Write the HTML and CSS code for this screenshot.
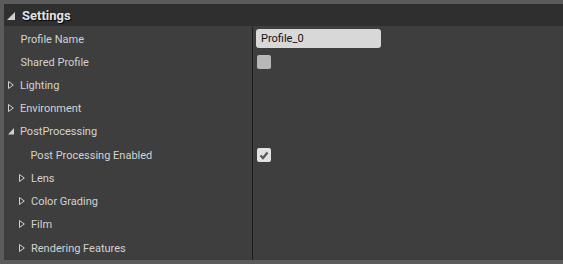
FILE: index.html
```html
<!DOCTYPE html>
<html>
<head>
<meta charset="utf-8">
<link rel="stylesheet" href="styles.css">
</head>
<body>
<div class="panel">
  <div class="header">
    <svg class="tri-open big" width="9" height="8" viewBox="0 0 9 8"><polygon points="8,0 8,8 0,8" fill="#cfcfcf"/></svg>
    <span class="title">Settings</span>
  </div>
  <div class="body">
    <div class="row">
      <div class="name l1"><span class="label">Profile Name</span></div>
      <div class="value"><div class="input">Profile_0</div></div>
    </div>
    <div class="row">
      <div class="name l1"><span class="label">Shared Profile</span></div>
      <div class="value"><div class="check"></div></div>
    </div>
    <div class="row">
      <div class="name l0"><svg class="tri" width="6" height="8" viewBox="0 0 6 8"><polygon points="0.5,0.5 5.3,4 0.5,7.5" fill="none" stroke="#cfcfcf" stroke-width="1"/></svg><span class="label">Lighting</span></div>
      <div class="value"></div>
    </div>
    <div class="row">
      <div class="name l0"><svg class="tri" width="6" height="8" viewBox="0 0 6 8"><polygon points="0.5,0.5 5.3,4 0.5,7.5" fill="none" stroke="#cfcfcf" stroke-width="1"/></svg><span class="label">Environment</span></div>
      <div class="value"></div>
    </div>
    <div class="row">
      <div class="name l0"><svg class="tri" width="6" height="7" viewBox="0 0 6 7"><polygon points="6,0 6,6.5 0,6.5" fill="#cfcfcf"/></svg><span class="label">PostProcessing</span></div>
      <div class="value"></div>
    </div>
    <div class="row">
      <div class="name l2"><span class="label">Post Processing Enabled</span></div>
      <div class="value"><div class="check on"><svg width="14" height="14" viewBox="0 0 14 14"><polyline points="3.5,7.5 6,10 10.5,4.5" fill="none" stroke="#585858" stroke-width="2.2"/></svg></div></div>
    </div>
    <div class="row">
      <div class="name l1t"><svg class="tri" width="6" height="8" viewBox="0 0 6 8"><polygon points="0.5,0.5 5.3,4 0.5,7.5" fill="none" stroke="#cfcfcf" stroke-width="1"/></svg><span class="label">Lens</span></div>
      <div class="value"></div>
    </div>
    <div class="row">
      <div class="name l1t"><svg class="tri" width="6" height="8" viewBox="0 0 6 8"><polygon points="0.5,0.5 5.3,4 0.5,7.5" fill="none" stroke="#cfcfcf" stroke-width="1"/></svg><span class="label">Color Grading</span></div>
      <div class="value"></div>
    </div>
    <div class="row">
      <div class="name l1t"><svg class="tri" width="6" height="8" viewBox="0 0 6 8"><polygon points="0.5,0.5 5.3,4 0.5,7.5" fill="none" stroke="#cfcfcf" stroke-width="1"/></svg><span class="label">Film</span></div>
      <div class="value"></div>
    </div>
    <div class="row">
      <div class="name l1t"><svg class="tri" width="6" height="8" viewBox="0 0 6 8"><polygon points="0.5,0.5 5.3,4 0.5,7.5" fill="none" stroke="#cfcfcf" stroke-width="1"/></svg><span class="label">Rendering Features</span></div>
      <div class="value"></div>
    </div>
  </div>
</div>
</body>
</html>
```
FILE: styles.css
```css
html, body {
  margin: 0;
  padding: 0;
  background: #5b5b5b;
}
body {
  width: 563px;
  height: 264px;
  overflow: hidden;
  font-family: Roboto, "Liberation Sans", sans-serif;
  color: #d2d2d2;
}
.panel {
  margin: 4px 0 0 4px;
  width: 559px;
  height: 256px;
  display: flex;
  flex-direction: column;
}
.header {
  height: 22px;
  background: #2f2f2f;
  display: flex;
  align-items: center;
  flex-shrink: 0;
}
.tri-open.big {
  margin-left: 3px;
  margin-right: 6px;
  margin-top: 1px;
}
.title {
  font-size: 13px;
  font-weight: bold;
  color: #e2e2e2;
  text-shadow: 1px 1px 1px #000;
}
.body {
  flex: 1;
  background: #3e3e3e;
  display: flex;
  flex-direction: column;
}
.row {
  height: 23.2px;
  display: flex;
  flex-shrink: 0;
}
.row:first-child {
  padding-top: 1px;
}
.row:last-child {
  flex: 1;
  align-items: stretch;
}
.name {
  width: 248px;
  display: flex;
  align-items: center;
  font-size: 11px;
  border-right: 1px solid #1b1b1b;
}
.name.l1 { padding-left: 16.5px; width: 231.5px; }
.name.l0 { padding-left: 4px; width: 244px; }
.name.l2 { padding-left: 26.5px; width: 221.5px; }
.name.l1t { padding-left: 15px; width: 233px; }
.tri {
  margin-right: 6px;
  flex-shrink: 0;
}
.label {
  white-space: nowrap;
  padding-top: 1px;
}
.value {
  flex: 1;
  display: flex;
  align-items: center;
  padding-left: 3px;
}
.input {
  width: 120px;
  height: 19px;
  background: #d8d8d8;
  border-radius: 3px;
  color: #121212;
  font-size: 11px;
  line-height: 19px;
  padding-left: 5px;
}
.check {
  width: 14px;
  height: 14px;
  border-radius: 2px;
  background: #b8b8b8;
  margin-left: 1px;
}
.check.on {
  background: #e2e2e2;
}
.check svg {
  display: block;
}
```
